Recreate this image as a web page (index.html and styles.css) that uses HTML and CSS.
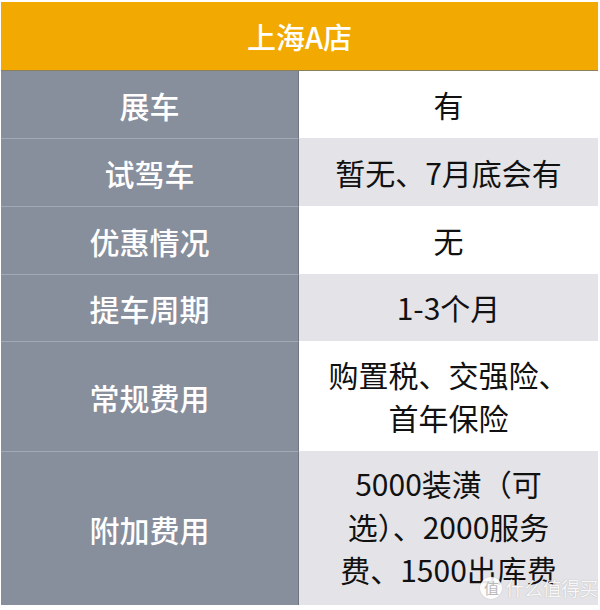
FILE: index.html
```html
<!DOCTYPE html>
<html lang="zh-CN">
<head>
<meta charset="utf-8">
<title>上海A店</title>
<link rel="stylesheet" href="styles.css">
</head>
<body>
<div class="page">
  <div class="table">
    <div class="head">上海A店</div>
    <div class="row r1"><div class="label">展车</div><div class="value">有</div></div>
    <div class="row r2 alt"><div class="label">试驾车</div><div class="value">暂无、7月底会有</div></div>
    <div class="row r3"><div class="label">优惠情况</div><div class="value">无</div></div>
    <div class="row r4 alt"><div class="label">提车周期</div><div class="value">1-3个月</div></div>
    <div class="row r5"><div class="label">常规费用</div><div class="value">购置税、交强险、<br>首年保险</div></div>
    <div class="row r6 alt"><div class="label">附加费用</div><div class="value">5000装潢（可<br>选）、2000服务<br>费、1500出库费</div></div>
    <div class="mark"><span class="mark-icon">值</span><span class="mark-text">什么值得买</span></div>
  </div>
</div>
</body>
</html>
```

FILE: styles.css
```css
html, body {
  margin: 0;
  padding: 0;
  background: #ffffff;
}
body {
  font-family: "Noto Sans CJK SC", "Noto Sans", "Liberation Sans", sans-serif;
}
.page {
  width: 600px;
  height: 610px;
  padding: 2px 2px 0 1px;
  box-sizing: border-box;
}
.table {
  position: relative;
  width: 597px;
}
.head {
  height: 68px;
  background: #f2aa02;
  color: #ffffff;
  font-size: 29px;
  font-weight: 500;
  display: flex;
  align-items: center;
  justify-content: center;
  border-bottom: 1px solid #8c7f5c;
}
.row {
  display: grid;
  grid-template-columns: 298px 1fr;
}
.r1 { height: 67px; }
.r2 { height: 68px; }
.r3 { height: 68px; }
.r4 { height: 67px; }
.r5 { height: 110px; }
.r6 { height: 154px; }
.label {
  background: #878e9c;
  color: #ffffff;
  font-size: 30px;
  font-weight: 500;
  display: flex;
  align-items: center;
  justify-content: center;
  border-right: 1px solid #6f7581;
  border-top: 1px solid #a3a9b4;
}
.r1 .label { border-top: none; }
.value {
  background: #ffffff;
  color: #111111;
  font-size: 30px;
  line-height: 43px;
  display: flex;
  align-items: center;
  justify-content: center;
  text-align: center;
}
.alt .value {
  background: #e4e3e7;
}
.r6 .value {
  padding-bottom: 4px;
}
.mark {
  position: absolute;
  right: 0;
  bottom: 4px;
  display: flex;
  align-items: center;
  gap: 3px;
  color: rgba(255, 255, 255, 0.92);
  text-shadow: 0 0 1px rgba(120, 120, 120, 0.6);
}
.mark-icon {
  width: 22px;
  height: 22px;
  border-radius: 50%;
  background: rgba(255, 255, 255, 0.9);
  color: #b9b9b9;
  font-size: 15px;
  line-height: 22px;
  text-align: center;
  text-shadow: none;
  box-shadow: 0 0 1px rgba(120, 120, 120, 0.6);
}
.mark-text {
  font-size: 19px;
  letter-spacing: -0.5px;
}
```
